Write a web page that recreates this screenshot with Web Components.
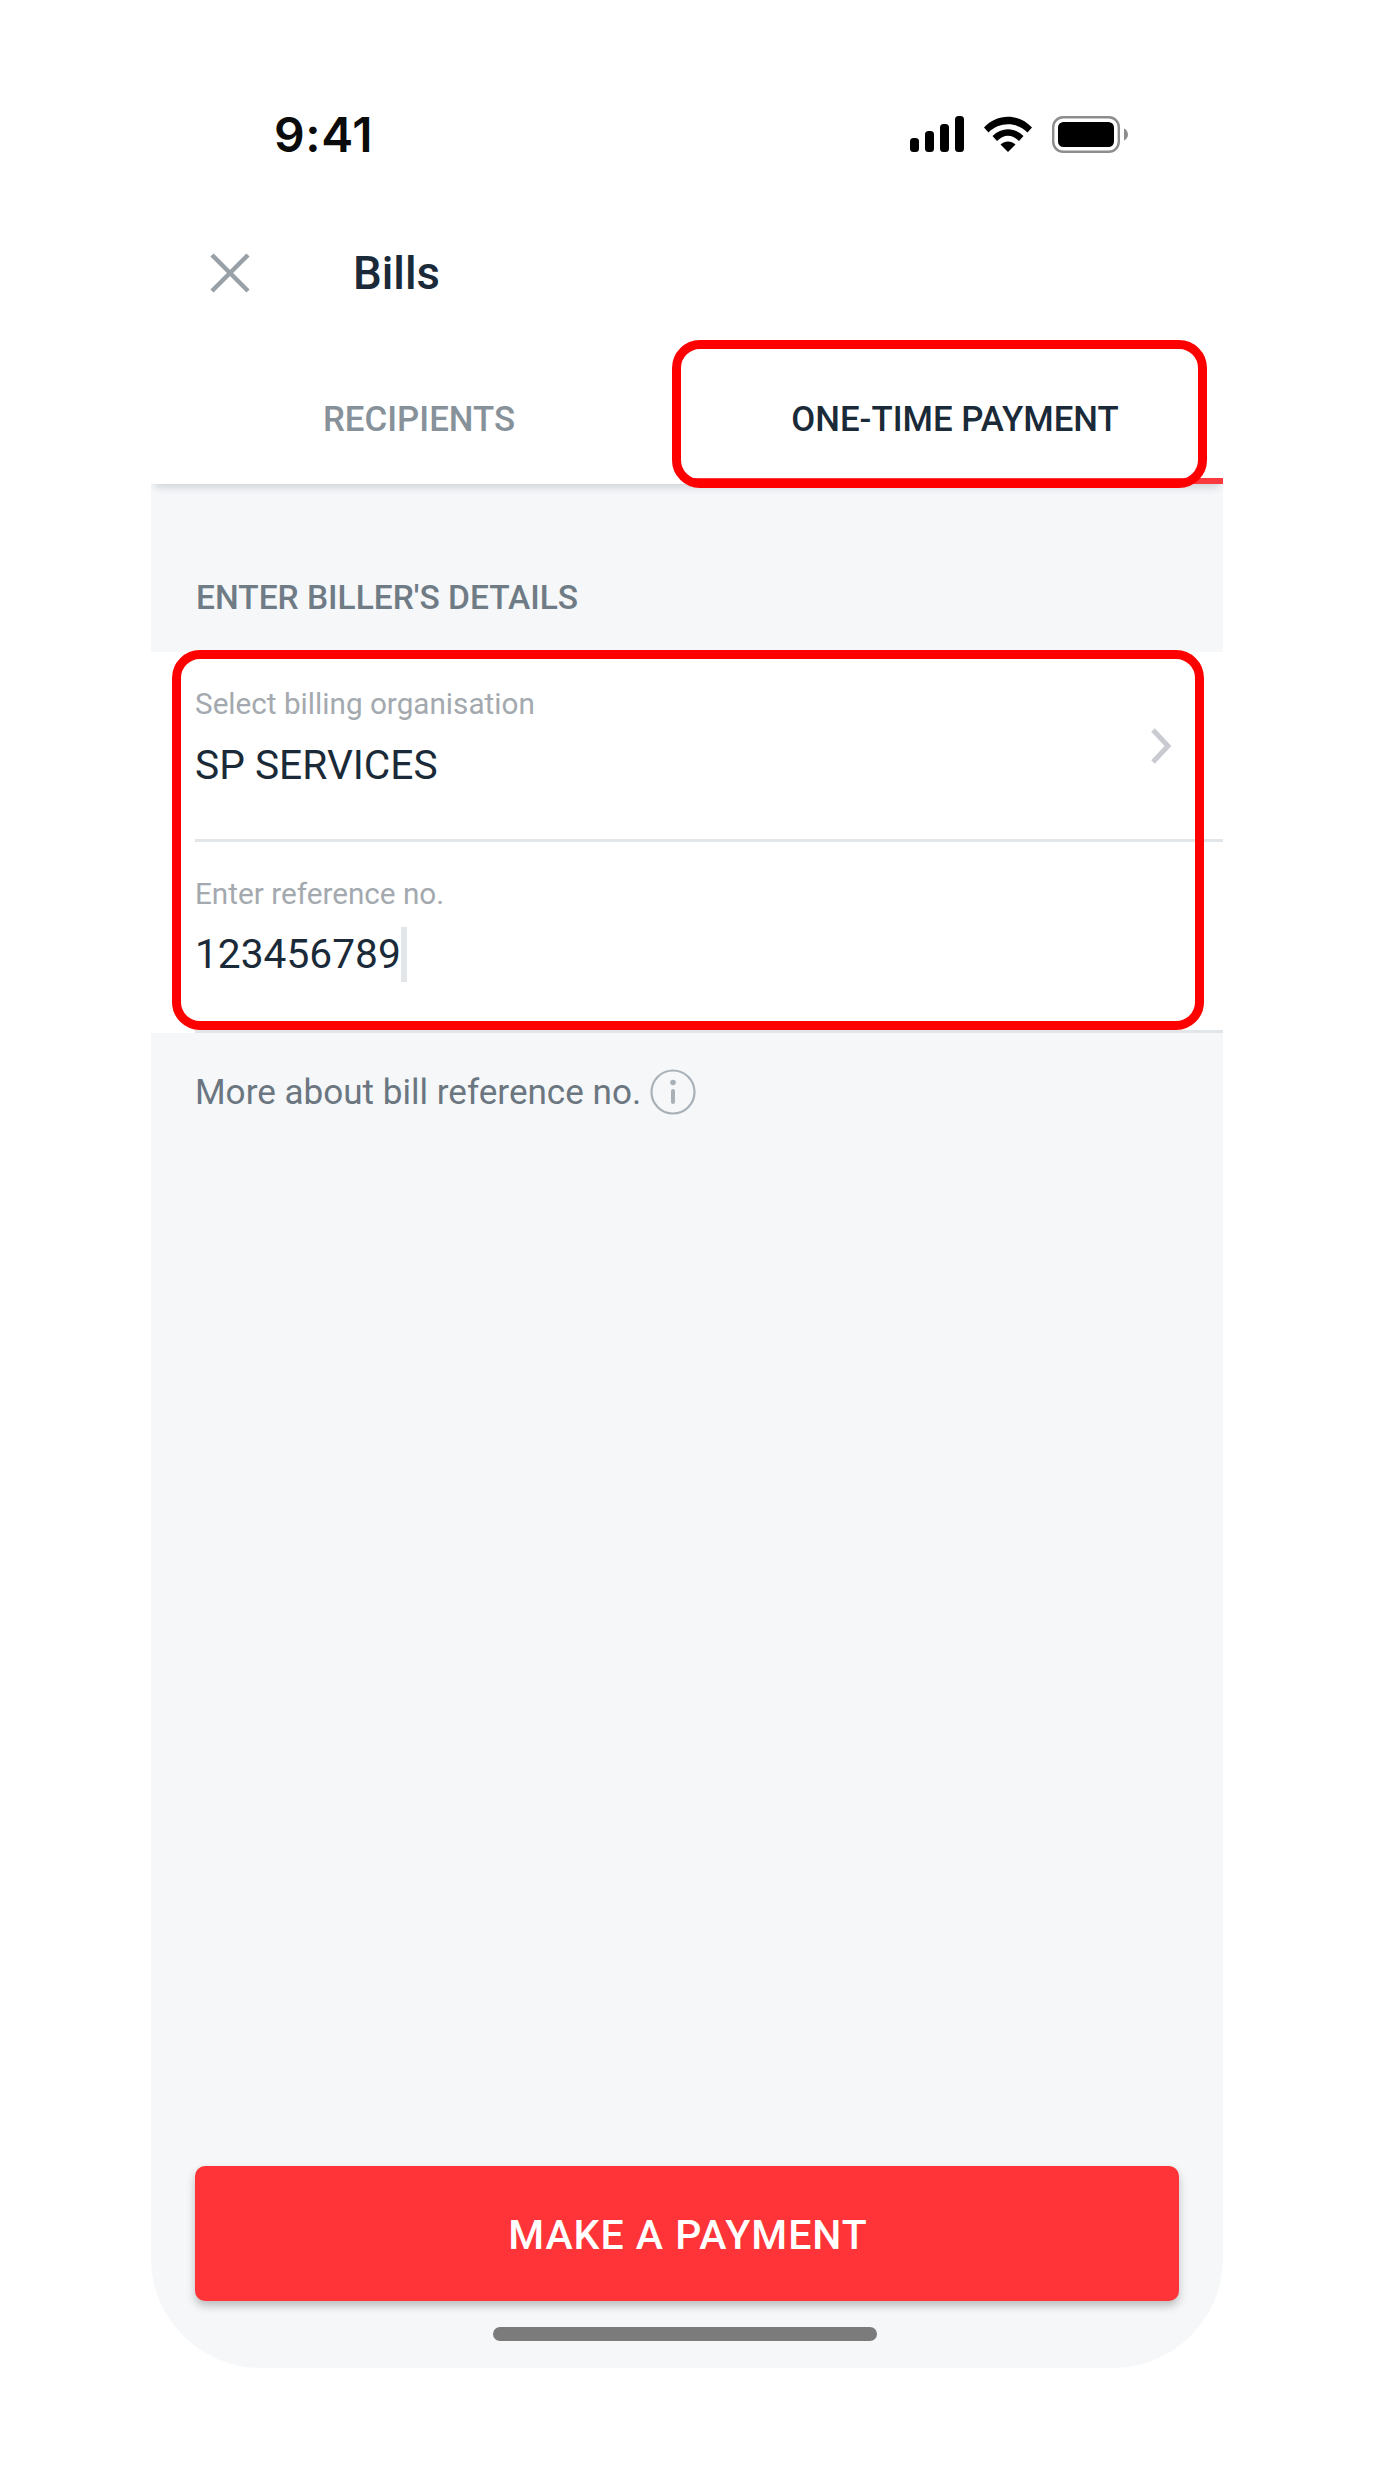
<!DOCTYPE html>
<html><head><meta charset="utf-8">
<style>html,body{margin:0;background:#fff}body{font-family:Roboto,sans-serif}</style>
</head><body>
<bill-screen>
  <status-bar slot="top" time="9:41"></status-bar>
  <nav-header slot="top" title="Bills"></nav-header>
  <tab-bar slot="top"></tab-bar>
  <section-label>ENTER BILLER'S DETAILS</section-label>
  <form-field label="Select billing organisation" value="SP SERVICES" chevron></form-field>
  <form-field label="Enter reference no." value="123456789" caret last></form-field>
  <info-link>More about bill reference no.</info-link>
  <pay-button>MAKE A PAYMENT</pay-button>
  <home-bar></home-bar>
  <note-box slot="notes" style="left:521px;top:340px;width:535px;height:148px"></note-box>
  <note-box slot="notes" style="left:21px;top:650px;width:1032px;height:380px"></note-box>
</bill-screen>
<script>
function def(name, html){
  customElements.define(name, class extends HTMLElement{
    connectedCallback(){
      if(this.shadowRoot) return;
      const r=this.attachShadow({mode:'open'});
      r.innerHTML=typeof html==='function'?html(this):html;
    }
  });
}
def('bill-screen',`<style>
:host{display:block;position:relative;width:1072px;height:2368px;margin-left:151px;font-family:Roboto,sans-serif}
.frame{display:flex;flex-direction:column;height:100%;background:#f5f7f9;border-radius:0 0 110px 110px;overflow:hidden}
.top{background:#fff;display:block;position:relative;z-index:1}
.body{flex:1;display:flex;flex-direction:column;min-height:0}
</style><div class="frame"><div class="top"><slot name="top"></slot></div><div class="body"><slot></slot></div></div><slot name="notes"></slot>`);
def('status-bar',e=>`<style>
:host{display:flex;align-items:flex-start;justify-content:space-between;height:200px;box-sizing:border-box;padding:106px 95px 0 123px}
.t{font:600 48px/57px Inter,sans-serif;color:#0b0b0b;letter-spacing:.6px}
.i{display:flex;gap:20px;margin-top:10px;align-items:flex-start}
svg{display:block}
</style><span class="t">${e.getAttribute('time')}</span><div class="i">
<svg width="54" height="36" viewBox="0 0 54 36"><rect x="0" y="22" width="9" height="14" rx="3.5"/><rect x="15" y="15" width="9" height="21" rx="3.5"/><rect x="30" y="8" width="9" height="28" rx="3.5"/><rect x="45" y="0" width="9" height="36" rx="3.5"/></svg>
<svg width="48" height="36" viewBox="0 0 48 36"><path d="M0 11.5C13-3 35-3 48 11.500L43.500 16.500C33 5.500 15 5.500 4.500 16.500Z"/><path d="M8.500 20C17.500 11 30.500 11 39.500 20L35 25C27.500 18 20.500 18 13 25Z"/><path d="M16.500 28.500C21 24.500 27 24.500 31.500 28.500L24 36Z"/></svg>
<svg width="76" height="37" viewBox="0 0 76 37"><rect x="1.200" y="1.200" width="65.600" height="34.600" rx="10" fill="none" stroke="#8d8d8d" stroke-width="2.400"/><rect x="6" y="6" width="56" height="25" rx="5.500"/><path d="M72 12.500C74.500 13.500 76 16 76 18.500S74.500 23.500 72 24.500Z" fill="#8d8d8d"/></svg>
</div>`);
def('nav-header',e=>`<style>
:host{display:flex;align-items:center;height:140px;box-sizing:border-box;padding:6px 0 0 59px}
svg{display:block;flex:none}
h1{margin:2px 0 0 103px;font:500 45.500px/52px Roboto,sans-serif;color:#1a2a38}
</style><svg width="40" height="40" viewBox="0 0 40 40"><path d="M2 2L38 38M38 2L2 38" stroke="#98a1a8" stroke-width="4.500" fill="none"/></svg><h1>${e.getAttribute('title')}</h1>`);
def('tab-bar',`<style>
:host{display:grid;grid-template-columns:1fr 1fr;height:144px;background:#fff;box-shadow:0 7px 8px -4px rgba(50,60,70,.2)}
div{display:flex;align-items:center;justify-content:center;box-sizing:border-box;font:500 34.800px/40px Roboto,sans-serif;color:#87919a;padding-top:13px}
.on{color:#1a2a38;border-bottom:6px solid #fb3a40;padding-top:19px}
</style><div>RECIPIENTS</div><div class="on">ONE-TIME PAYMENT</div>`);
def('section-label',`<style>
:host{display:flex;align-items:center;height:168px;box-sizing:border-box;padding:60px 0 0 45px;font:500 33.500px/40px Roboto,sans-serif;color:#6f7b85}
</style><slot></slot>`);
def('form-field',e=>{
 const last=e.hasAttribute('last');
 return `<style>
:host{display:block;background:#fff}
.w{position:relative;box-sizing:border-box;height:${last?191:190}px;padding:34px 0 0 44px}
.line{position:absolute;left:44px;right:0;bottom:0;height:3px;background:#e3e6e9}
.l{font:400 29.700px/36px Roboto,sans-serif;color:#a3a9ae}
.v{font:400 40.700px/46px Roboto,sans-serif;color:#1a2a38;margin-top:${last?19:20}px;display:flex;align-items:center}
.c{width:6px;height:55px;background:#e3e6e9;margin:-4px 0 -5px 0}
svg{position:absolute;right:51px;top:76px}
</style><div class="w"><div class="l">${e.getAttribute('label')}</div><div class="v">${e.getAttribute('value')}${e.hasAttribute('caret')?'<span class="c"></span>':''}</div>${e.hasAttribute('chevron')?'<svg width="22" height="36" viewBox="0 0 22 36"><path d="M3 2L18 18L3 34" fill="none" stroke="#c8ccd0" stroke-width="5"/></svg>':''}<div class="line"></div></div>`});
def('info-link',`<style>
:host{display:flex;align-items:center;gap:9px;padding:36px 0 0 44px;font:400 35.100px/44px Roboto,sans-serif;color:#6b7680}
svg{display:block}
</style><slot></slot><svg width="46" height="46" viewBox="0 0 46 46"><circle cx="23" cy="23" r="21.500" fill="none" stroke="#a9b1b8" stroke-width="2.200"/><circle cx="23" cy="13.500" r="2.800" fill="#a9b1b8"/><rect x="21" y="20" width="4" height="15" rx="2" fill="#a9b1b8"/></svg>`);
def('pay-button',`<style>
:host{display:flex;align-items:center;justify-content:center;margin:auto 44px 0;height:135px;background:#ff3438;border-radius:10px;box-shadow:0 5px 9px rgba(60,60,60,.3);color:#fff;font:500 41px/48px Roboto,sans-serif;letter-spacing:1px;padding:2px 0 0 2px;box-sizing:border-box}
</style><slot></slot>`);
def('home-bar',`<style>
:host{display:block;width:384px;height:14px;margin:26px 0 27px 342px;background:#7b7b7b;border-radius:7px}
</style>`);
def('note-box',`<style>
:host{display:block;position:absolute;z-index:2;box-sizing:border-box;border:9px solid #fe0000;border-radius:28px}
</style>`);
</script>
</body></html>
